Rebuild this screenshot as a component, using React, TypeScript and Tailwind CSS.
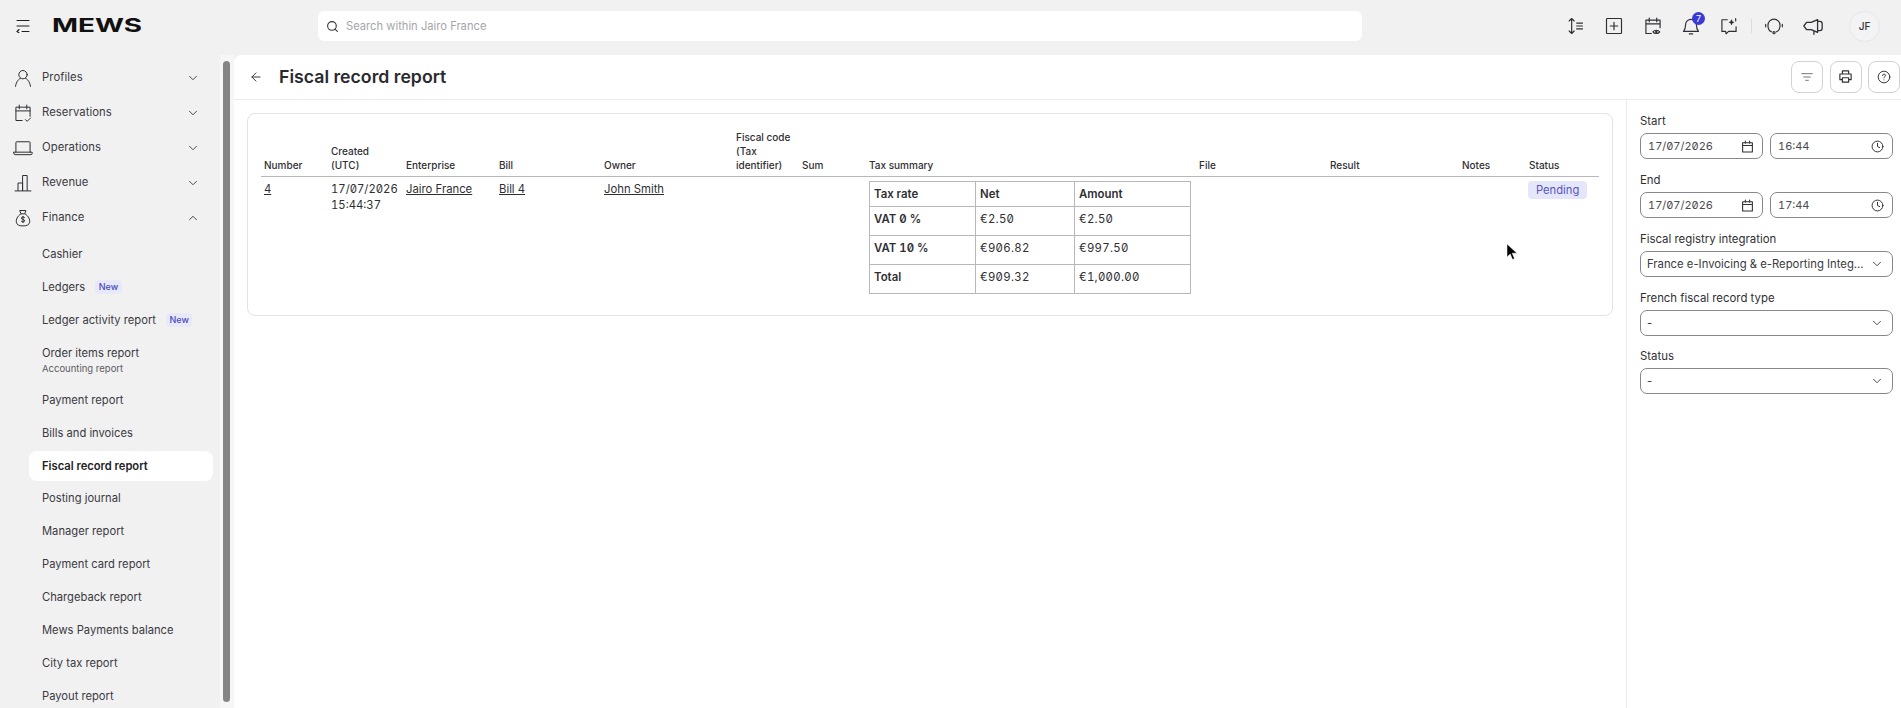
import type { ReactNode } from 'react';
import { ArrowLeft, ChevronDown, ChevronUp, Clock, Search } from 'lucide-react';

const sans = "font-['Inter','Liberation_Sans',sans-serif]";
const digits = "[font-feature-settings:'zero','tnum']";

function Icon({ size = 20, sw = 1.4, children }: { size?: number; sw?: number; children: ReactNode }) {
  return (
    <svg width={size} height={size} viewBox="0 0 24 24" fill="none" stroke="#2f2f33" strokeWidth={sw} strokeLinecap="round" strokeLinejoin="round" className="shrink-0">
      {children}
    </svg>
  );
}

const NAV = [
  {
    label: 'Profiles',
    icon: (
      <>
        <circle cx="12" cy="8" r="5" />
        <path d="M3 22c1-6 4-9 6-9.6M21 22c-1-6-4-9-6-9.6" />
      </>
    ),
  },
  {
    label: 'Reservations',
    icon: (
      <>
        <path d="M11 21H3.5V5h17v11M3.5 9.5h17M7.5 2.5V7M16.500 2.500V7" />
        <path d="m15 20 2 2 4-4" />
      </>
    ),
  },
  {
    label: 'Operations',
    icon: (
      <>
        <path d="M3.5 17V5.5a1 1 0 0 1 1-1h15a1 1 0 0 1 1 1V17" />
        <path d="M1 17h22v1.5a1.5 1.5 0 0 1-1.5 1.5h-19A1.5 1.5 0 0 1 1 18.5z" />
      </>
    ),
  },
  {
    label: 'Revenue',
    icon: <path d="M2.5 21.5h19M6 21v-9h5.500v9M11.500 21V3h5.500v18" />,
  },
];

const SUB_ITEMS: { label: string; tag?: boolean; sub?: string; active?: boolean }[] = [
  { label: 'Cashier' },
  { label: 'Ledgers', tag: true },
  { label: 'Ledger activity report', tag: true },
  { label: 'Order items report', sub: 'Accounting report' },
  { label: 'Payment report' },
  { label: 'Bills and invoices' },
  { label: 'Fiscal record report', active: true },
  { label: 'Posting journal' },
  { label: 'Manager report' },
  { label: 'Payment card report' },
  { label: 'Chargeback report' },
  { label: 'Mews Payments balance' },
  { label: 'City tax report' },
  { label: 'Payout report' },
];

const COLUMNS = [
  { label: 'Number', w: 'w-[67px]' },
  { label: 'Created (UTC)', w: 'w-[75px]' },
  { label: 'Enterprise', w: 'w-[93px]' },
  { label: 'Bill', w: 'w-[105px]' },
  { label: 'Owner', w: 'w-[132px]' },
  { label: 'Fiscal code (Tax identifier)', w: 'w-[66px]' },
  { label: 'Sum', w: 'w-[67px]' },
  { label: 'Tax summary', w: 'w-[330px]' },
  { label: 'File', w: 'w-[131px]' },
  { label: 'Result', w: 'w-[132px]' },
  { label: 'Notes', w: 'w-[67px]' },
  { label: 'Status', w: 'w-[73px]' },
];

const TAX_ROWS = [
  ['VAT 0 %', '€2.50', '€2.50'],
  ['VAT 10 %', '€906.82', '€997.50'],
  ['Total', '€909.32', '€1,000.00'],
];

function TopBar() {
  return (
    <header className="h-[55px] shrink-0 flex items-center pb-[3px]">
      <div className="w-[52px] pl-[16px] shrink-0">
        <svg width="14" height="14" viewBox="0 0 14 14" fill="none" stroke="#1f1f23" strokeWidth="1.1" strokeLinecap="round">
          <path d="M1 1.5h12M1 7h12M6 12.500h7M3 10.500 1 12.500l2 1.500" />
        </svg>
      </div>
      <div className="w-[266px] shrink-0">
        <span className={`inline-block origin-left scale-x-[1.47] text-[19px] leading-none font-bold text-[#111] ${sans}`}>MEWS</span>
      </div>
      <div className="w-[1044px] h-[30px] shrink-0 bg-white rounded-md flex items-center pl-[8px] gap-[7px]">
        <Search size={13} color="#333" strokeWidth={2} />
        <span className={`text-[11.2px] text-[#a6a6aa] ${sans}`}>Search within Jairo France</span>
      </div>
      <div className="flex items-center pl-[203px] h-full">
        <div className="w-[20px] flex justify-center">
          <Icon size={20}>
            <path d="M8 3v18M5 6l3-3 3 3M5 18l3 3 3-3M14 8.500h7M14 12h7M14 15.500h7" />
          </Icon>
        </div>
        <div className="w-[20px] ml-[19px] flex justify-center">
          <Icon size={20}>
            <rect x="3" y="3" width="18" height="18" rx="1" />
            <path d="M12 7.500v9M7.500 12h9" />
          </Icon>
        </div>
        <div className="w-[20px] ml-[19px] flex justify-center">
          <Icon size={20}>
            <path d="M10 21H3.500V5h17v9M3.500 9.500h17M7.500 2.500V7M16.500 2.500V7" />
            <path d="M12 19c1.500-2.500 6.500-2.500 8 0-1.500 2.500-6.500 2.500-8 0z" />
            <circle cx="16" cy="19" r="0.8" />
          </Icon>
        </div>
        <div className="relative w-[20px] ml-[18px] flex justify-center">
          <Icon size={20}>
            <path d="M3 18.500c2-2 2.500-4 2.500-8a6.500 6.500 0 0 1 13 0c0 4 .5 6 2.500 8zM10 21.500h4" />
          </Icon>
          <span className={`absolute -top-[4px] left-[11px] w-[13px] h-[13px] rounded-full bg-[#3a3ad6] text-white text-[9px] leading-[13px] text-center ${sans}`}>7</span>
        </div>
        <div className="w-[20px] ml-[18px] flex justify-center">
          <Icon size={20}>
            <path d="M10 4.500H3.500v14H8l.5 3 3-3h9V13" />
            <path d="M12.500 7.500c2 0 2.500-.5 2.500-2.500 0 2 .5 2.500 2.500 2.500-2 0-2.500.5-2.500 2.500 0-2-.5-2.500-2.500-2.500zM20 3v3" fill="#2f2f33" />
          </Icon>
        </div>
        <div className="w-px h-[14px] bg-[#dcdcdf] ml-[12px]" />
        <div className="w-[20px] ml-[12px] flex justify-center">
          <Icon size={20}>
            <path d="M9 19c-2.500-1-4.200-3-4.200-7v-1a7.200 7.200 0 0 1 14.400 0v1c0 4-1.700 6-4.200 7" />
            <circle cx="12" cy="20" r="1.3" />
            <path d="M2 10v3M22 10v3" />
          </Icon>
        </div>
        <div className="w-[22px] ml-[18px] flex justify-center">
          <Icon size={22}>
            <path d="M2 12l3-4h5l7-3v14l-7-3H5z" />
            <path d="M17 7h2.500A2.500 2.500 0 0 1 22 9.500v5a2.500 2.500 0 0 1-2.500 2.500H17M13 18v3" />
          </Icon>
        </div>
        <div className={`ml-[25px] w-[31px] h-[31px] rounded-full bg-[#f3f3f5] border border-[#e7e7ea] flex items-center justify-center text-[10px] font-medium text-[#2f2f33] ${sans}`}>JF</div>
      </div>
    </header>
  );
}

function Sidebar() {
  return (
    <aside className={`w-[220px] shrink-0 overflow-hidden pt-[5px] ${sans}`}>
      {NAV.map((item) => (
        <div key={item.label} className="h-[35px] flex items-center pl-[13px] pr-[20px]">
          <span className="w-[29px] shrink-0 flex">
            <Icon size={20} sw={1.2}>
              {item.icon}
            </Icon>
          </span>
          <span className="flex-1 text-[11.3px] tracking-[0.05px] text-[#3a3a3f]">{item.label}</span>
          <ChevronDown size={14} color="#333" strokeWidth={1.5} />
        </div>
      ))}
      <div className="h-[35px] flex items-center pl-[13px] pr-[20px]">
        <span className="w-[29px] shrink-0 flex">
          <Icon size={20} sw={1.2}>
            <path d="M8.500 3h7l-1.500 4h-4zM9.500 7C5 10 3.500 14 4 17c.5 3 3 4.500 8 4.500s7.500-1.500 8-4.500c.5-3-1-7-5.500-10" />
            <path d="M14 11.500c-.5-1-3.500-1.500-4 .3-.5 2.200 4.300 1.500 4 3.700-.3 1.800-3.500 1.500-4.200.3M12 10v7.500" />
          </Icon>
        </span>
        <span className="flex-1 text-[11.3px] tracking-[0.05px] text-[#3a3a3f]">Finance</span>
        <ChevronUp size={14} color="#333" strokeWidth={1.5} />
      </div>
      <div className="flex flex-col gap-[3px] pt-[4.5px] pl-[29px] pr-[7px]">
        {SUB_ITEMS.map((item) => (
          <div
            key={item.label}
            className={`${item.sub ? 'h-[44px]' : 'h-[29.9px]'} shrink-0 flex flex-col justify-center pl-[13px] rounded-lg ${item.active ? 'bg-white' : ''}`}
          >
            <div className="flex items-center gap-[10px]">
              <span className={`text-[11.2px] ${item.active ? 'font-semibold text-[#222226]' : 'text-[#3a3a3f]'}`}>{item.label}</span>
              {item.tag && <span className="px-[3.5px] h-[14px] leading-[14px] rounded bg-[#e8e8fb] text-[9px] font-medium text-[#4a4ab8]">New</span>}
            </div>
            {item.sub && <span className="text-[9.5px] leading-[13px] text-[#5c5c62]">{item.sub}</span>}
          </div>
        ))}
      </div>
    </aside>
  );
}

function TaxTable() {
  return (
    <table className="w-[321px] table-fixed border-collapse text-[11.4px] text-[#2f2f33] mt-[4px]">
      <colgroup>
        <col className="w-[106px]" />
        <col className="w-[99px]" />
        <col className="w-[116px]" />
      </colgroup>
      <tbody>
        <tr className="h-[25px] font-semibold">
          <td className="border border-[#b8b8bb] px-[4px]">Tax rate</td>
          <td className="border border-[#b8b8bb] px-[4px]">Net</td>
          <td className="border border-[#b8b8bb] px-[4px]">Amount</td>
        </tr>
        {TAX_ROWS.map((row) => (
          <tr key={row[0]} className="h-[29px]">
            <td className={`border border-[#b8b8bb] px-[4px] pb-[3px] font-semibold ${digits}`}>{row[0]}</td>
            <td className={`border border-[#b8b8bb] px-[4px] pb-[3px] tracking-[0.3px] ${digits}`}>{row[1]}</td>
            <td className={`border border-[#b8b8bb] px-[4px] pb-[3px] tracking-[0.3px] ${digits}`}>{row[2]}</td>
          </tr>
        ))}
      </tbody>
    </table>
  );
}

function ReportTable() {
  return (
    <section className="border border-[#e3e3e5] rounded-lg h-[203px] px-[13px] pt-[15.5px]">
      <table className="w-[1338px] table-fixed border-collapse">
        <colgroup>
          {COLUMNS.map((c) => (
            <col key={c.label} className={c.w} />
          ))}
        </colgroup>
        <thead>
          <tr className="border-b border-[#b8b8bb]">
            {COLUMNS.map((c) => (
              <th key={c.label} className="align-bottom text-left font-medium text-[10px] leading-[14px] text-[#2f2f33] px-[3px] pb-[4px]">
                {c.label}
              </th>
            ))}
          </tr>
        </thead>
        <tbody>
          <tr className="align-top text-[11.3px] leading-[16px] text-[#2f2f33]">
            <td className="px-[3px] pt-[4.5px] underline">4</td>
            <td className={`px-[3px] pt-[4.5px] whitespace-nowrap ${digits}`}>
              17/07/2026
              <br />
              15:44:37
            </td>
            <td className="px-[3px] pt-[4.5px] underline whitespace-nowrap">Jairo France</td>
            <td className="px-[3px] pt-[4.5px] underline">Bill 4</td>
            <td className="px-[3px] pt-[4.5px] underline">John Smith</td>
            <td />
            <td />
            <td className="px-[3px]">
              <TaxTable />
            </td>
            <td />
            <td />
            <td />
            <td className="px-[2px] pt-[4.5px]">
              <span className="inline-flex items-center h-[18px] px-[8px] rounded bg-[#e6e6fa] text-[#5656bd] text-[11.2px]">Pending</span>
            </td>
          </tr>
        </tbody>
      </table>
    </section>
  );
}

function Field({ label, children }: { label: string; children: ReactNode }) {
  return (
    <div className="h-[59px] shrink-0">
      <div className="h-[22px] pt-[2px] text-[11.4px] leading-[17px] text-[#2f2f33]">{label}</div>
      {children}
    </div>
  );
}

function InputBox({ value, icon }: { value: string; icon: ReactNode }) {
  return (
    <div className={`flex-1 h-[26px] rounded-[7px] border border-[#88888c] flex items-center justify-between pl-[7px] pr-[8px] text-[11px] text-[#4a4a4f] ${digits}`}>
      <span>{value}</span>
      {icon}
    </div>
  );
}

function Select({ value }: { value: string }) {
  return (
    <div className="h-[26px] rounded-[7px] border border-[#88888c] flex items-center justify-between pl-[6px] pr-[8px] text-[11.3px] text-[#3a3a3f]">
      <span className="whitespace-nowrap">{value}</span>
      <ChevronDown size={14} color="#333" strokeWidth={1.5} />
    </div>
  );
}

const calendar = (
  <Icon size={13} sw={2}>
    <path d="M3 5h18v17H3zM3 10h18M8 2v4M16 2v4" />
  </Icon>
);
const clock = <Clock size={13} color="#2f2f33" strokeWidth={1.8} />;

function FilterPanel() {
  return (
    <aside className={`w-[275px] shrink-0 border-l border-[#ececee] pl-[13px] pr-[8px] pt-[11px] flex flex-col ${sans}`}>
      <Field label="Start">
        <div className="flex gap-[7px]">
          <InputBox value="17/07/2026" icon={calendar} />
          <InputBox value="16:44" icon={clock} />
        </div>
      </Field>
      <Field label="End">
        <div className="flex gap-[7px]">
          <InputBox value="17/07/2026" icon={calendar} />
          <InputBox value="17:44" icon={clock} />
        </div>
      </Field>
      <Field label="Fiscal registry integration">
        <Select value="France e-Invoicing & e-Reporting Integ..." />
      </Field>
      <Field label="French fiscal record type">
        <Select value="-" />
      </Field>
      <div className="-mt-[1px]">
        <Field label="Status">
          <Select value="-" />
        </Field>
      </div>
    </aside>
  );
}

function HeaderButton({ children }: { children: ReactNode }) {
  return <div className="w-[32px] h-[32px] rounded-lg border border-[#d2d2d5] flex items-center justify-center">{children}</div>;
}

export default function App() {
  return (
    <div className={`relative h-screen w-full overflow-hidden flex flex-col bg-[#f1f1f2] ${sans}`}>
      <TopBar />
      <div className="flex-1 min-h-0 flex">
        <Sidebar />
        <div className="w-[14px] shrink-0 bg-[#f6f6f7] pl-[3px] pt-[6px] pb-[6px]">
          <div className="w-[7px] h-full rounded-full bg-[#858585]" />
        </div>
        <main className="flex-1 min-w-0 bg-white rounded-tl-lg flex flex-col">
          <div className="h-[45px] shrink-0 border-b border-[#ececee] flex items-center pl-[15px] pr-[1px]">
            <ArrowLeft size={14} color="#2f2f33" strokeWidth={1.6} />
            <h1 className="ml-[16px] flex-1 text-[17.7px] font-semibold text-[#2a2a2e]">Fiscal record report</h1>
            <div className="flex gap-[6.5px] -mt-[1px]">
              <HeaderButton>
                <Icon size={16} sw={1.5}>
                  <path d="M4 7h16M7 12h10M10 17h4" stroke="#77777b" />
                </Icon>
              </HeaderButton>
              <HeaderButton>
                <Icon size={15} sw={1.8}>
                  <path d="M7 8V3h10v5M7 17H3V8h18v9h-4M7 14h10v7H7z" />
                </Icon>
              </HeaderButton>
              <HeaderButton>
                <Icon size={14} sw={1.6}>
                  <circle cx="12" cy="12" r="10" />
                  <path d="M9.500 9.500a2.500 2.500 0 1 1 3.500 2.300c-.8.400-1 .9-1 1.700M12 17h.01" />
                </Icon>
              </HeaderButton>
            </div>
          </div>
          <div className="flex-1 min-h-0 flex">
            <div className="flex-1 min-w-0 pl-[13px] pr-[13px] pt-[13px]">
              <ReportTable />
            </div>
            <FilterPanel />
          </div>
        </main>
      </div>
      {/* mouse pointer left in the capture */}
      <svg className="absolute left-[1506px] top-[243px]" width="12" height="18" viewBox="0 0 12 18">
        <path d="M1 1v13l3.2-3 2.300 5.500 2-1-2.300-5.300H11z" fill="#000" stroke="#fff" strokeWidth="0.5" />
      </svg>
    </div>
  );
}
